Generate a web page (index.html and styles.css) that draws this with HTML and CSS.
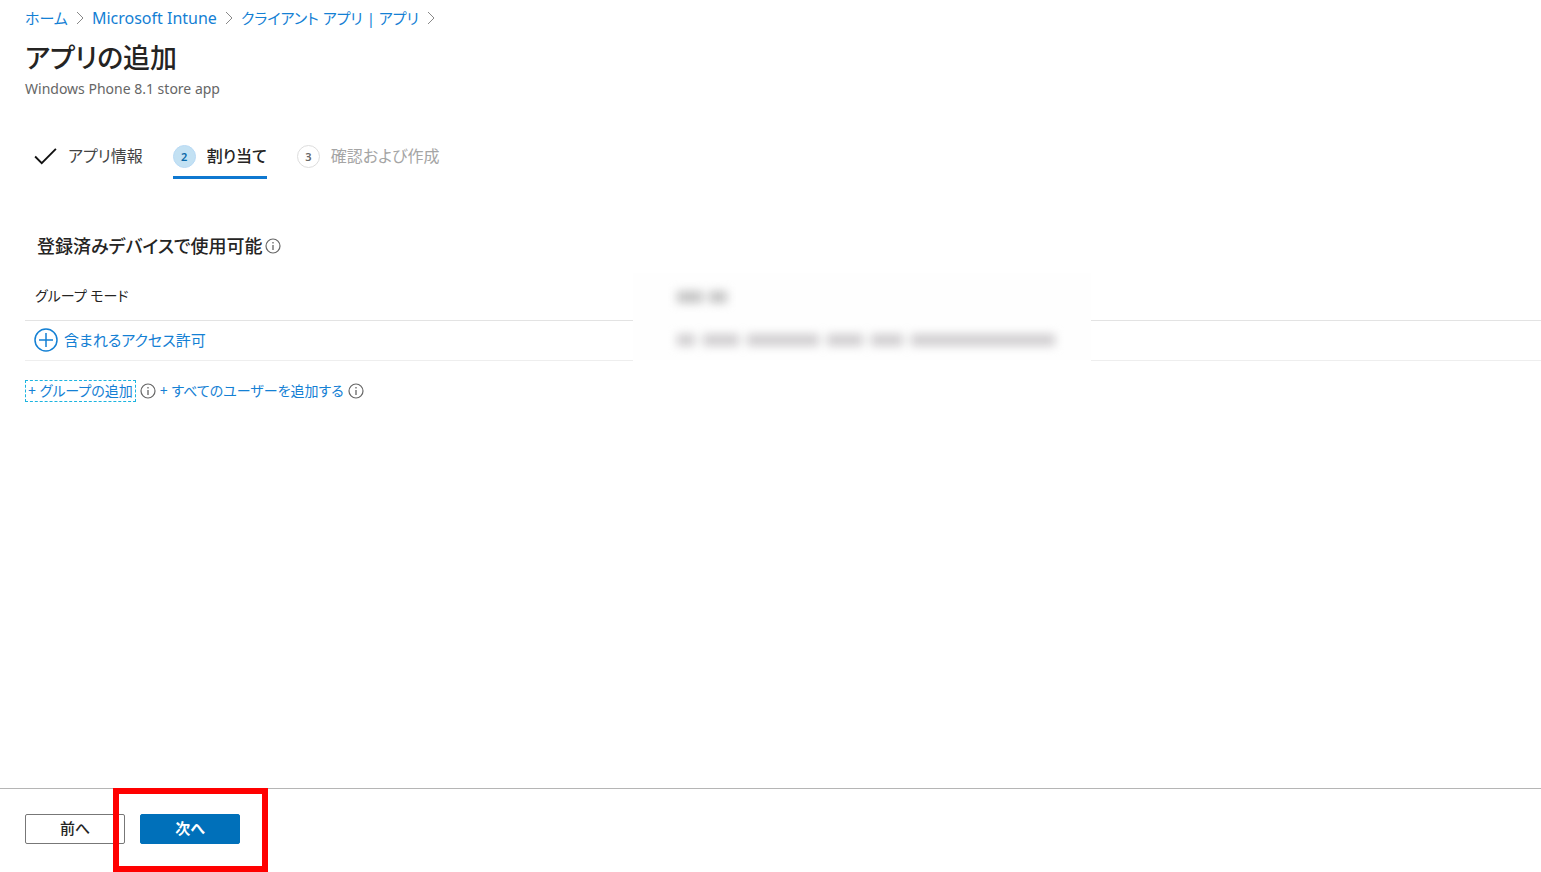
FILE: index.html
```html
<!DOCTYPE html>
<html lang="ja">
<head>
  <meta charset="UTF-8">
  <meta name="viewport" content="width=device-width, initial-scale=1.0">
  <title>アプリの追加</title>
  <link rel="stylesheet" href="styles.css">
</head>
<body>
  <svg class="defs" aria-hidden="true">
    <symbol id="chevron" viewBox="0 0 8 14"><path d="M1 1l6 6-6 6" fill="none" stroke="currentColor"/></symbol>
    <symbol id="info" viewBox="0 0 16 16">
      <circle cx="8" cy="8" r="7" fill="none" stroke="currentColor" stroke-width="1.2"/>
      <path d="M8 7v5M8 4v1.6" stroke="currentColor" stroke-width="1.3"/>
    </symbol>
  </svg>

  <header>
    <nav class="breadcrumb">
      <a href="#">ホーム</a>
      <svg class="chevron"><use href="#chevron"/></svg>
      <a class="latin" href="#">Microsoft Intune</a>
      <svg class="chevron"><use href="#chevron"/></svg>
      <a href="#">クライアント アプリ | アプリ</a>
      <svg class="chevron"><use href="#chevron"/></svg>
    </nav>
    <h1>アプリの追加</h1>
    <p class="subtitle">Windows Phone 8.1 store app</p>
  </header>

  <main>
    <nav class="steps">
      <a class="step" href="#">
        <svg class="check" viewBox="0 0 24 18"><path d="M1 9l7 7L23 1" fill="none" stroke="currentColor" stroke-width="2"/></svg>
        <span>アプリ情報</span>
      </a>
      <a class="step active" href="#">
        <span class="num">2</span>
        <span>割り当て</span>
      </a>
      <a class="step disabled" href="#">
        <span class="num">3</span>
        <span>確認および作成</span>
      </a>
    </nav>

    <h2>登録済みデバイスで使用可能 <svg class="info"><use href="#info"/></svg></h2>

    <table>
      <thead>
        <tr>
          <th class="mode">グループ モード</th>
          <th class="group"><div class="masked"><i class="w24"></i><i class="w16"></i></div></th>
          <th></th>
        </tr>
      </thead>
      <tbody>
        <tr>
          <td>
            <a class="included" href="#">
              <svg class="plus" viewBox="0 0 24 24"><path d="M12 5v14M5 12h14" stroke="currentColor" stroke-width="1.5"/><circle cx="12" cy="12" r="11" fill="none" stroke="currentColor" stroke-width="1.5"/></svg>
              含まれるアクセス許可
            </a>
          </td>
          <td class="group"><div class="masked light"><i class="w16"></i><i class="w36"></i><i class="w72"></i><i class="w36"></i><i class="w32"></i><i class="w144"></i></div></td>
          <td></td>
        </tr>
      </tbody>
    </table>

    <div class="add-links">
      <a class="focused" href="#">+ グループの追加</a>
      <svg class="info"><use href="#info"/></svg>
      <a href="#">+ すべてのユーザーを追加する</a>
      <svg class="info"><use href="#info"/></svg>
    </div>
  </main>

  <footer>
    <button type="button">前へ</button>
    <button type="button" class="primary">次へ</button>
    <div class="highlight"></div>
  </footer>
</body>
</html>
```
FILE: styles.css
```css
* {
  box-sizing: border-box;
}
body {
  margin: 0;
  min-height: 100vh;
  display: flex;
  flex-direction: column;
  background: #fff;
  color: #252423;
  font-family: "Noto Sans", "Noto Sans CJK JP", sans-serif;
  font-size: 15px;
  line-height: 24px;
  font-feature-settings: "palt";
}
a {
  color: #1480d4;
  text-decoration: none;
}
.defs {
  display: none;
}
header {
  padding: 6px 25px 0;
}
.breadcrumb {
  display: flex;
  align-items: center;
  gap: 8px;
}
.breadcrumb .latin {
  font-size: 16px;
}
.chevron {
  width: 8px;
  height: 14px;
  color: #888;
}
h1 {
  margin: 9px 0 0;
  font-size: 27px;
  line-height: 38px;
  font-weight: 500;
}
.subtitle {
  margin: 2px 0 0;
  font-size: 14px;
  line-height: 20px;
  color: #666;
}
main {
  flex: 1;
  padding-left: 25px;
}
.steps {
  display: flex;
  gap: 30px;
  padding: 40px 0 0 9px;
  font-size: 16px;
}
.step {
  display: flex;
  align-items: center;
  gap: 11px;
  height: 40px;
  padding-bottom: 6px;
  color: #444;
}
.step.active {
  border-bottom: 3px solid #0f78d0;
  padding-bottom: 3px;
  color: #252423;
  font-weight: 500;
}
.step.disabled {
  color: #a5a5a5;
}
.check {
  width: 23px;
  height: 17px;
  color: #111;
}
.num {
  width: 23px;
  height: 23px;
  border: 1px solid #ddd;
  border-radius: 50%;
  color: #666;
  font-size: 11px;
  font-weight: 600;
  line-height: 21px;
  text-align: center;
}
.active .num {
  background: #c3e1f3;
  border-color: #b9daf5;
  color: #0a68a8;
}
h2 {
  display: flex;
  align-items: center;
  gap: 2px;
  margin: 55px 0 0 12px;
  font-size: 18px;
  line-height: 24px;
  font-weight: 500;
}
.info {
  width: 16px;
  height: 16px;
  color: #666;
}
table {
  width: 100%;
  margin-top: 15px;
  border-collapse: collapse;
  table-layout: fixed;
}
th, td {
  height: 40px;
  padding: 0 9px;
  border-bottom: 1px solid #eee;
  text-align: left;
  font-weight: 400;
}
th {
  height: 47px;
  border-bottom-color: #e3e3e3;
  font-size: 14px;
}
.mode {
  width: 608px;
  padding-left: 10px;
}
.group {
  width: 458px;
  padding-left: 44px;
  border-bottom: none;
  background: #fefefe;
}
.included {
  display: flex;
  align-items: center;
  gap: 6px;
}
.plus {
  width: 24px;
  height: 24px;
}
/* 伏せ字 */
.masked {
  display: flex;
  gap: 6px;
  filter: blur(5px);
}
.masked i {
  height: 12px;
  background: #c4c4c4;
}
.masked.light {
  gap: 8px;
}
.masked.light i {
  background: #d0ced0;
}
.w16 { width: 18px; }
.w24 { width: 26px; }
.w32 { width: 32px; }
.w36 { width: 36px; }
.w72 { width: 72px; }
.w144 { width: 144px; }
.add-links {
  display: flex;
  align-items: center;
  gap: 4px;
  margin-top: 19px;
  font-size: 14px;
  line-height: 22px;
}
.focused {
  padding: 0 2px;
  border: 1px dashed #1cb4e0;
  line-height: 20px;
}
footer {
  position: relative;
  display: flex;
  gap: 15px;
  padding: 25px 25px 28px;
  border-top: 1px solid #b5b5b5;
}
button {
  width: 100px;
  height: 30px;
  padding: 0 0 2px;
  border: 1px solid #777;
  border-radius: 2px;
  background: #fff;
  color: #252423;
  font: inherit;
  font-weight: 500;
  line-height: 24px;
}
.primary {
  border-color: #0070ba;
  background: #0070ba;
  color: #fff;
  font-weight: 700;
}
/* 「次へ」を囲む赤枠 */
.highlight {
  position: absolute;
  top: -1px;
  left: 113px;
  width: 155px;
  height: 84px;
  border: 6px solid #f00;
  pointer-events: none;
}
```
